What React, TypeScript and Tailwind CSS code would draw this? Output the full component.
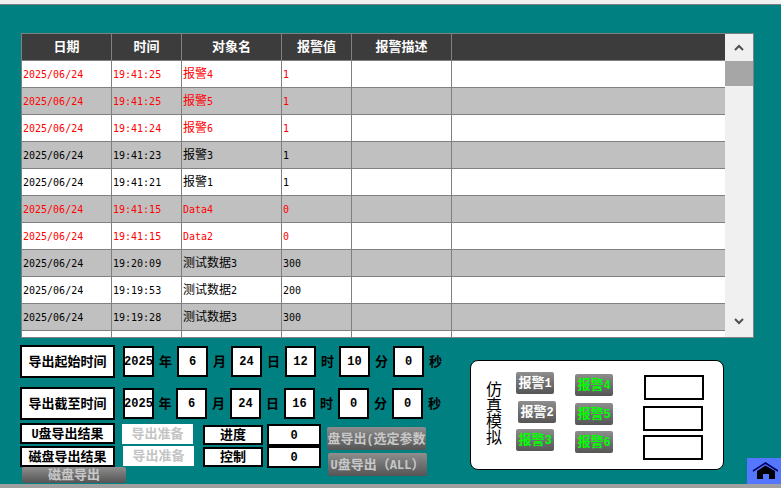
const CJK = '"Liberation Sans", "Noto Sans CJK SC", sans-serif'

type Row = { date: string; time: string; name: string; value: string; alarm?: boolean }

const rows: Row[] = [
  { date: '2025/06/24', time: '19:41:25', name: '报警4', value: '1', alarm: true },
  { date: '2025/06/24', time: '19:41:25', name: '报警5', value: '1', alarm: true },
  { date: '2025/06/24', time: '19:41:24', name: '报警6', value: '1', alarm: true },
  { date: '2025/06/24', time: '19:41:23', name: '报警3', value: '1' },
  { date: '2025/06/24', time: '19:41:21', name: '报警1', value: '1' },
  { date: '2025/06/24', time: '19:41:15', name: 'Data4', value: '0', alarm: true },
  { date: '2025/06/24', time: '19:41:15', name: 'Data2', value: '0', alarm: true },
  { date: '2025/06/24', time: '19:20:09', name: '测试数据3', value: '300' },
  { date: '2025/06/24', time: '19:19:53', name: '测试数据2', value: '200' },
  { date: '2025/06/24', time: '19:19:28', name: '测试数据3', value: '300' }
]

const columns = 'grid grid-cols-[90px_70px_100px_70px_100px_274px]'
const thinLatin = 'font-["DejaVu_Sans_Mono",monospace] text-[10px]'
const boldLatin = 'font-["Liberation_Mono",monospace] text-[12px]'

// Latin runs are half the width of the CJK ones, so they get their own font
const Mixed = ({ text, latin }: { text: string; latin: string }): JSX.Element => (
  <>
    {text.split(/([\x20-\x7e]+)/).map((part, idx) =>
      idx % 2 === 1 ? (
        <span key={idx} className={latin}>
          {part}
        </span>
      ) : (
        part
      )
    )}
  </>
)

const Cell = ({ text }: { text?: string }): JSX.Element => (
  <div className="flex items-center pl-[1px] border-r border-[#808080] whitespace-nowrap overflow-hidden text-[12px]">
    <span>{text !== undefined && <Mixed text={text} latin={thinLatin} />}</span>
  </div>
)

const AlarmTable = (): JSX.Element => (
  <div className="flex w-[733px] h-[305px] ml-[21px] border border-[#808080] bg-white overflow-hidden">
    <div className="w-[703px] shrink-0">
      <div className={`${columns} h-[27px] bg-[#3c3c3c] border-b border-[#808080] text-white text-[13px] font-bold`}>
        {['日期', '时间', '对象名', '报警值', '报警描述', ''].map((title, idx) => (
          <div key={idx} className="flex items-center justify-center border-r border-[#808080]">
            {title}
          </div>
        ))}
      </div>
      {rows.map((row, idx) => (
        <div
          key={idx}
          className={`${columns} h-[27px] border-b border-[#808080] ${idx % 2 === 1 ? 'bg-[#c0c0c0]' : 'bg-white'} ${
            row.alarm ? 'text-[#ff0000]' : 'text-black'
          }`}
        >
          <Cell text={row.date} />
          <Cell text={row.time} />
          <Cell text={row.name} />
          <Cell text={row.value} />
          <Cell />
          <Cell />
        </div>
      ))}
      <div className={`${columns} h-[6px]`}>
        <Cell />
        <Cell />
        <Cell />
        <Cell />
        <Cell />
        <Cell />
      </div>
    </div>
    {/* Scrollbar */}
    <div className="flex flex-col w-[28px] h-full bg-[#f0f0f0]">
      <div className="flex items-center justify-center h-[27px]">
        <svg width="10" height="7" viewBox="0 0 10 7" fill="none" stroke="#505050" strokeWidth="2">
          <path d="M1 6l4-4 4 4" />
        </svg>
      </div>
      <div className="h-[25px] bg-[#a6a6a6]" />
      <div className="flex flex-1 items-end justify-center pb-[12px]">
        <svg width="10" height="7" viewBox="0 0 10 7" fill="none" stroke="#505050" strokeWidth="2">
          <path d="M1 1l4 4 4-4" />
        </svg>
      </div>
    </div>
  </div>
)

const Field = ({ value }: { value: string }): JSX.Element => (
  <div className={`flex items-center justify-center w-[31px] h-[31px] border-[2px] border-black bg-white text-black font-bold ${boldLatin}`}>
    {value}
  </div>
)

const Unit = ({ text, narrow }: { text: string; narrow?: boolean }): JSX.Element => (
  <div className={`flex items-center justify-center ${narrow ? 'w-[22px]' : 'w-[23px]'} text-[13px] font-bold text-black`}>{text}</div>
)

const LabelBox = ({ text, className }: { text: string; className: string }): JSX.Element => (
  <div className={`flex items-center justify-center border-[2px] border-black bg-white text-[13px] text-black font-bold ${className}`}>
    <span>
      <Mixed text={text} latin={boldLatin} />
    </span>
  </div>
)

const DateRow = ({
  label,
  values,
  narrow,
  className
}: {
  label: string
  values: string[]
  narrow?: boolean
  className?: string
}): JSX.Element => {
  const units = ['年', '月', '日', '时', '分', '秒']
  return (
    <div className={`flex items-center ${className ?? ''}`}>
      <LabelBox text={label} className="w-[95px] h-[33px] mr-[8px]" />
      {values.map((value, idx) => (
        <div key={idx} className="flex items-center">
          <Field value={value} />
          <Unit text={units[idx]} narrow={narrow && idx === 0} />
        </div>
      ))}
    </div>
  )
}

const GrayButton = ({ text, className }: { text: string; className: string }): JSX.Element => (
  <div
    className={`flex items-center justify-center overflow-hidden whitespace-nowrap rounded-[2px] bg-gradient-to-b from-[#8e8e8e] to-[#555555] text-[13px] font-bold ${className}`}
  >
    <span>
      <Mixed text={text} latin={boldLatin} />
    </span>
  </div>
)

const Ready = ({ className }: { className: string }): JSX.Element => (
  <div className={`flex items-center justify-center w-[71px] h-[20px] bg-white text-[#c4c4c4] text-[13px] font-bold ${className}`}>
    导出准备
  </div>
)

const ExportBlock = (): JSX.Element => (
  <div className="w-[440px] ml-[20px] mt-[7px] shrink-0">
    <DateRow label="导出起始时间" values={['2025', '6', '24', '12', '10', '0']} />
    <DateRow label="导出截至时间" values={['2025', '6', '24', '16', '0', '0']} narrow className="mt-[9px]" />
    <div className="flex items-start mt-[3px]">
      <div className="w-[95px] shrink-0">
        <LabelBox text="U盘导出结果" className="h-[21px]" />
        <LabelBox text="磁盘导出结果" className="h-[21px] mt-[2px]" />
        <GrayButton text="磁盘导出" className="w-[104px] h-[16px] ml-[2px] text-[#c8c8c8]" />
      </div>
      <div className="ml-[7px] mt-[1px] w-[72px] shrink-0">
        <Ready className="" />
        <Ready className="mt-[2px] ml-[1px]" />
      </div>
      <div className="ml-[9px] mt-[2px] w-[60px] shrink-0">
        <LabelBox text="进度" className="h-[20px]" />
        <LabelBox text="控制" className="h-[20px] mt-[2px]" />
      </div>
      <div className="ml-[4px] mt-[1px] w-[54px] shrink-0">
        <LabelBox text="0" className="h-[22px]" />
        <LabelBox text="0" className="h-[22px]" />
      </div>
      <div className="ml-[6px] mt-[4px] shrink-0">
        <GrayButton text="盘导出(选定参数" className="w-[99px] h-[23px] text-[#c8c8c8]" />
        <GrayButton text="U盘导出（ALL）" className="w-[99px] h-[23px] mt-[3px] ml-[1px] text-[#c8c8c8]" />
      </div>
    </div>
  </div>
)

const SimButton = ({ text, className }: { text: string; className: string }): JSX.Element => (
  <GrayButton text={text} className={`w-[38px] h-[22px] ${className}`} />
)

const SimPanel = (): JSX.Element => (
  <div className="flex items-start w-[254px] h-[110px] ml-[10px] mt-[22px] rounded-[8px] border border-black bg-white shrink-0">
    <div className="flex flex-col w-[17px] ml-[15px] mt-[21px] text-[16px] leading-[16px] text-black">
      <span>仿</span>
      <span>真</span>
      <span>模</span>
      <span>拟</span>
    </div>
    <div className="w-[40px] ml-[13px] mt-[11px]">
      <SimButton text="报警1" className="text-white" />
      <SimButton text="报警2" className="mt-[7px] ml-[2px] text-white" />
      <SimButton text="报警3" className="mt-[6px] text-[#00ff00]" />
    </div>
    <div className="w-[38px] ml-[19px] mt-[13px]">
      <SimButton text="报警4" className="text-[#00ff00]" />
      <SimButton text="报警5" className="mt-[7px] text-[#00ff00]" />
      <SimButton text="报警6" className="mt-[6px] text-[#00ff00]" />
    </div>
    <div className="ml-[30px] mt-[14px]">
      <div className="w-[60px] h-[25px] ml-[1px] border-[2px] border-black" />
      <div className="w-[60px] h-[25px] mt-[6px] border-[2px] border-black" />
      <div className="w-[60px] h-[25px] mt-[4px] border-[2px] border-black" />
    </div>
  </div>
)

const App = (): JSX.Element => (
  <div className="relative flex flex-col w-[781px] h-[488px] overflow-hidden bg-[#008080]" style={{ fontFamily: CJK }}>
    <div className="h-[5px] shrink-0 bg-[#f0f0f0] border-b border-[#808080]" />
    <div className="flex-1 pt-[28px]">
      <AlarmTable />
      <div className="flex items-start">
        <ExportBlock />
        <SimPanel />
      </div>
    </div>
    <div className="h-[4px] shrink-0 bg-[#a0a0a0]" />
    {/* Home button */}
    <div className="absolute right-0 bottom-[4px] flex items-center justify-center w-[34px] h-[26px] pl-[2px] bg-[#5577ff]">
      <svg width="26" height="20" viewBox="0 0 26 20">
        <path d="M1 10L13.5 2 26 10" fill="none" stroke="#000060" strokeWidth="1.5" />
        <path d="M5 10l8.500-5.500L23 10v8h-6v-5h-6v5H5z" fill="#000000" />
      </svg>
    </div>
  </div>
)

export default App
